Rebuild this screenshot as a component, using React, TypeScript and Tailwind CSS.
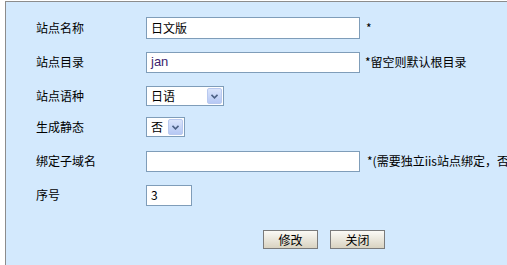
import type { ReactNode } from 'react';

const font = { fontFamily: '"Noto Sans CJK SC", "Liberation Sans", sans-serif' };

function Row({ label, h, children }: { label: string; h: string; children: ReactNode }) {
  return (
    <div className={`flex items-center ${h}`}>
      <div className="w-[110px] shrink-0 text-[12px] text-black">{label}</div>
      <div className="flex items-center shrink-0">{children}</div>
    </div>
  );
}

function TextBox({ value, w, h = 'h-[22px]', tone = 'text-black' }: { value: string; w: string; h?: string; tone?: string }) {
  return (
    <div className={`${w} ${h} shrink-0 border border-[#7f9db9] bg-white flex items-center pl-[4px] text-[12px] ${tone}`}>
      {value}
    </div>
  );
}

function Select({ value, w }: { value: string; w: string }) {
  return (
    <div className={`${w} h-[20px] border border-[#7f9db9] bg-white flex items-center justify-between pl-[4px] pr-[1px] text-[12px] text-black`}>
      <span>{value}</span>
      <span className="w-[15px] h-[16px] rounded-[2px] border border-[#b9c9ef] bg-gradient-to-b from-[#dbe5fb] to-[#b6c8f4] flex items-center justify-center">
        <svg width="7" height="5" viewBox="0 0 7 5">
          <path d="M0.5 0.8 L3.5 3.8 L6.5 0.8" fill="none" stroke="#4d6185" strokeWidth="1.6" />
        </svg>
      </span>
    </div>
  );
}

function Btn({ children }: { children: ReactNode }) {
  return (
    <div className="w-[55px] h-[19px] border border-[#7b7b7b] bg-gradient-to-b from-[#fbfaf6] to-[#d9d3c1] flex items-center justify-center text-[12px] text-black">
      {children}
    </div>
  );
}

export default function App() {
  return (
    <div className="w-[507px] h-[265px] overflow-hidden bg-white pt-[1px] pl-[5px]" style={font}>
      <div className="h-full border-t border-l border-[#8c8c8c] bg-[#d3e9fd] pl-[30px] pt-[9px] whitespace-nowrap">
        <Row label="站点名称" h="h-[34px]">
          <TextBox value="日文版" w="w-[214px]" />
          <span className="ml-[6px] text-[12px] text-black">*</span>
        </Row>
        <Row label="站点目录" h="h-[34px]">
          <TextBox value="jan" w="w-[214px]" h="h-[21px]" tone="text-[#3c1e6e] font-['Liberation_Sans'] text-[13px]" />
          <span className="ml-[5px] text-[12px] text-black">*留空则默认根目录</span>
        </Row>
        <Row label="站点语种" h="h-[34px]">
          <Select value="日语" w="w-[78px]" />
        </Row>
        <Row label="生成静态" h="h-[28px]">
          <Select value="否" w="w-[39px]" />
        </Row>
        <Row label="绑定子域名" h="h-[40px]">
          <TextBox value="" w="w-[214px]" h="h-[21px]" />
          <span className="ml-[7px] text-[12px] text-black">*(需要独立iis站点绑定，否则无效)</span>
        </Row>
        <Row label="序号" h="h-[28px]">
          <TextBox value="3" w="w-[46px]" h="h-[21px]" />
        </Row>
        <div className="flex gap-[12px] pl-[227px] mt-[21px]">
          <Btn>修改</Btn>
          <Btn>关闭</Btn>
        </div>
      </div>
    </div>
  );
}
